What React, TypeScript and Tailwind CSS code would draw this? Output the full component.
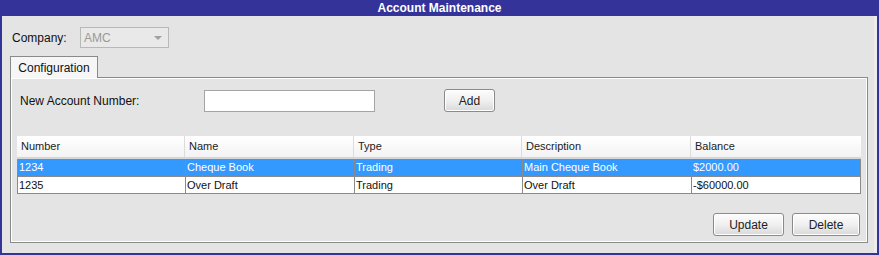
import React from "react";

const rows = [
  { number: "1234", name: "Cheque Book", type: "Trading", description: "Main Cheque Book", balance: "$2000.00", selected: true },
  { number: "1235", name: "Over Draft", type: "Trading", description: "Over Draft", balance: "-$60000.00", selected: false },
];

const cols = ["Number", "Name", "Type", "Description", "Balance"];

const btn =
  "h-[23px] rounded-[3px] border border-[#8a8a8a] bg-gradient-to-b from-[#fdfdfd] via-[#f0f0f0] to-[#d9d9d9] text-[12px] text-[#222] shadow-[inset_0_0_0_1px_#ffffff]";

const App = () => {
  return (
    <main
      className="flex h-[255px] w-[879px] flex-col bg-[#333399] px-[2px] pb-[2px]"
      style={{ fontFamily: '"Liberation Sans", Arial, sans-serif' }}
    >
      <div className="flex h-[16px] items-center justify-center text-[12px] font-bold text-white">
        Account Maintenance
      </div>
      <div className="flex flex-1 flex-col border-r-[3px] border-[#ececec] bg-[#e4e4e4] pl-[8px] pr-[6px] pt-[11px]">
        <div className="flex items-center pl-[2px]">
          <span className="w-[68px] text-[12px] text-[#111]">Company:</span>
          <div className="flex h-[21px] w-[89px] items-center justify-between border border-[#b8b8b8] bg-[#e9e9e9] pl-[3px] pr-[6px] text-[12px] text-[#9a9a9a]">
            AMC
            <span className="h-0 w-0 border-x-[4px] border-t-[4px] border-x-transparent border-t-[#a0a0a0]" />
          </div>
        </div>

        <div className="mt-[8px] flex">
          <div className="relative z-10 -mb-px flex h-[22px] w-[88px] items-center justify-center border border-b-0 border-[#8a8a8a] bg-[#f6f6f6] text-[12px] text-[#111]">
            Configuration
          </div>
        </div>

        <div className="flex h-[166px] flex-col border border-[#8a8a8a] shadow-[inset_1px_1px_0_#ffffff,inset_-1px_-1px_0_#ffffff] px-[6px] pt-[11px]">
          <div className="flex items-center">
            <span className="w-[187px] pl-[3px] text-[12px] text-[#111]">New Account Number:</span>
            <div className="h-[22px] w-[171px] border border-[#a4a4a4] bg-white" />
            <button className={`${btn} ml-[69px] w-[51px]`}>Add</button>
          </div>

          <div className="mt-[24px] flex flex-col border-b border-[#8a8a8a] text-[11px]">
            <div className="grid h-[23px] grid-cols-[168px_169px_168px_169px_169px] bg-gradient-to-b from-white to-[#f3f3f3] border-b-[2px] border-[#d6d6d6]">
              {cols.map((c, i) => (
                <div key={c} className={`flex items-center pl-[4px] text-[#222] ${i < 4 ? "border-r border-[#dcdcdc]" : ""}`}>
                  {c}
                </div>
              ))}
            </div>
            {rows.map((r) => (
              <div
                key={r.number}
                className={`grid h-[17px] grid-cols-[168px_169px_168px_169px_169px] border-l border-[#8a8a8a] ${
                  r.selected ? "bg-[#3399ff] text-white" : "bg-white text-[#111] border-t border-t-[#8a8a8a]"
                }`}
              >
                {[r.number, r.name, r.type, r.description, r.balance].map((v, i) => (
                  <div key={i} className={`flex items-center pl-[1px] ${i < 4 ? "border-r border-[#8a8a8a]" : "border-r border-[#8a8a8a]"}`}>
                    {v}
                  </div>
                ))}
              </div>
            ))}
          </div>

          <div className="mt-[19px] flex justify-end gap-[8px] pr-[1px]">
            <button className={`${btn} w-[71px]`}>Update</button>
            <button className={`${btn} w-[68px]`}>Delete</button>
          </div>
        </div>
      </div>
    </main>
  );
};

export default App;
